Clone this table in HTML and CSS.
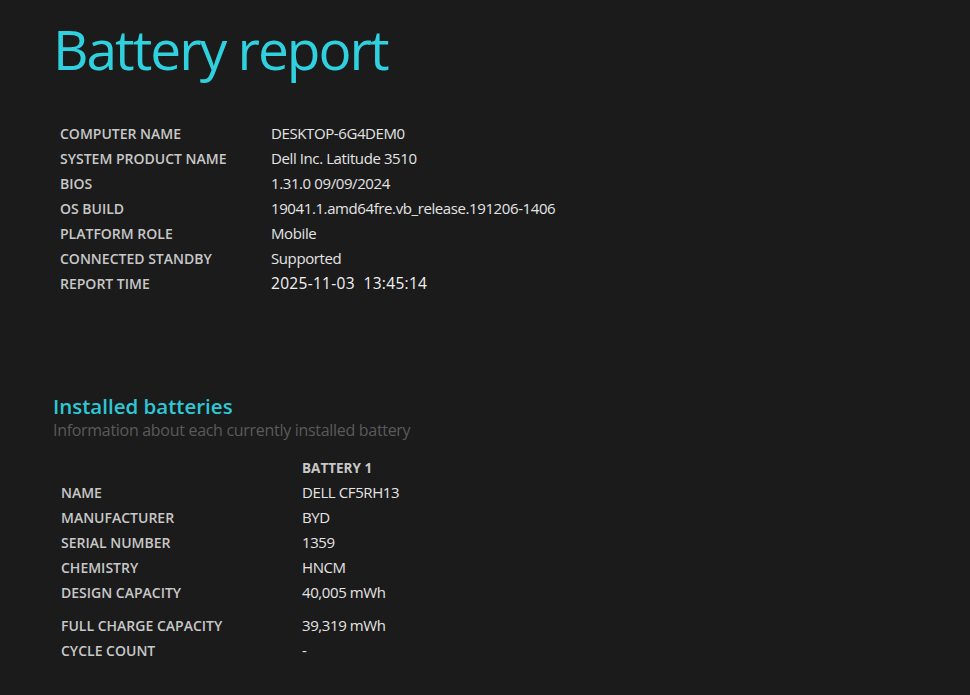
FILE: index.html
```html
<!DOCTYPE html>
<html>
<head>
<meta charset="utf-8">
<link rel="stylesheet" href="styles.css">
</head>
<body>
<main class="page">
  <h1 class="title">Battery report</h1>
  <table class="info">
    <tr><td class="label">COMPUTER NAME</td><td class="value">DESKTOP-6G4DEM0</td></tr>
    <tr><td class="label">SYSTEM PRODUCT NAME</td><td class="value">Dell Inc. Latitude 3510</td></tr>
    <tr><td class="label">BIOS</td><td class="value">1.31.0 09/09/2024</td></tr>
    <tr><td class="label">OS BUILD</td><td class="value">19041.1.amd64fre.vb_release.191206-1406</td></tr>
    <tr><td class="label">PLATFORM ROLE</td><td class="value">Mobile</td></tr>
    <tr><td class="label">CONNECTED STANDBY</td><td class="value">Supported</td></tr>
    <tr><td class="label">REPORT TIME</td><td class="value time">2025-11-03 &nbsp;13:45:14</td></tr>
  </table>

  <section class="section">
    <h2 class="heading">Installed batteries</h2>
    <div class="sub">Information about each currently installed battery</div>
    <table class="batt">
      <tr class="head"><td class="label"></td><td class="colhead">BATTERY 1</td></tr>
      <tr><td class="label">NAME</td><td class="value">DELL CF5RH13</td></tr>
      <tr><td class="label">MANUFACTURER</td><td class="value">BYD</td></tr>
      <tr><td class="label">SERIAL NUMBER</td><td class="value">1359</td></tr>
      <tr><td class="label">CHEMISTRY</td><td class="value">HNCM</td></tr>
      <tr class="gap"><td class="label">DESIGN CAPACITY</td><td class="value">40,005 mWh</td></tr>
      <tr><td class="label">FULL CHARGE CAPACITY</td><td class="value">39,319 mWh</td></tr>
      <tr><td class="label">CYCLE COUNT</td><td class="value">-</td></tr>
    </table>
  </section>
</main>
</body>
</html>
```

FILE: styles.css
```css
html, body {
  margin: 0;
  padding: 0;
  background: #1b1b1b;
  height: 100%;
  overflow: hidden;
}
body {
  font-family: "Open Sans", "Noto Sans", sans-serif;
  color: #e6e6e6;
}
.page {
  padding: 14px 0 0 53px;
}
.title {
  margin: 0;
  font-family: "Open Sans", sans-serif;
  font-weight: 400;
  font-size: 55px;
  line-height: 70px;
  color: #2fd1de;
  letter-spacing: -2px;
}
.info, .batt {
  border-collapse: collapse;
}
.info {
  margin-top: 37px;
  margin-left: 7px;
}
.info td, .batt td {
  padding: 0;
  height: 25px;
  line-height: 25px;
  vertical-align: middle;
  white-space: nowrap;
}
.label {
  font-size: 14px;
  font-weight: 600;
  color: #c8c8c8;
  letter-spacing: 0;
}
.info .label { width: 211px; }
.value {
  font-size: 15px;
  color: #e4e4e4;
  letter-spacing: -0.4px;
}
.time {
  font-size: 15.5px;
  font-weight: 500;
  color: #f2f2f2;
  letter-spacing: 0.3px;
}
.section {
  margin-top: 97px;
}
.heading {
  margin: 0;
  font-size: 20.5px;
  font-weight: 600;
  line-height: 26px;
  color: #2ec8d4;
  letter-spacing: 0;
}
.sub {
  font-size: 16px;
  line-height: 22px;
  color: #5a5a5a;
  letter-spacing: -0.3px;
}
.batt {
  margin-top: 16px;
  margin-left: 8px;
}
.batt .label { width: 241px; }
.batt tr.head td {
  height: 23px;
  line-height: 23px;
}
.colhead {
  font-size: 13.5px;
  font-weight: 700;
  color: #c8c8c8;
}
.batt tr.gap td {
  height: 33px;
  vertical-align: top;
}
```
